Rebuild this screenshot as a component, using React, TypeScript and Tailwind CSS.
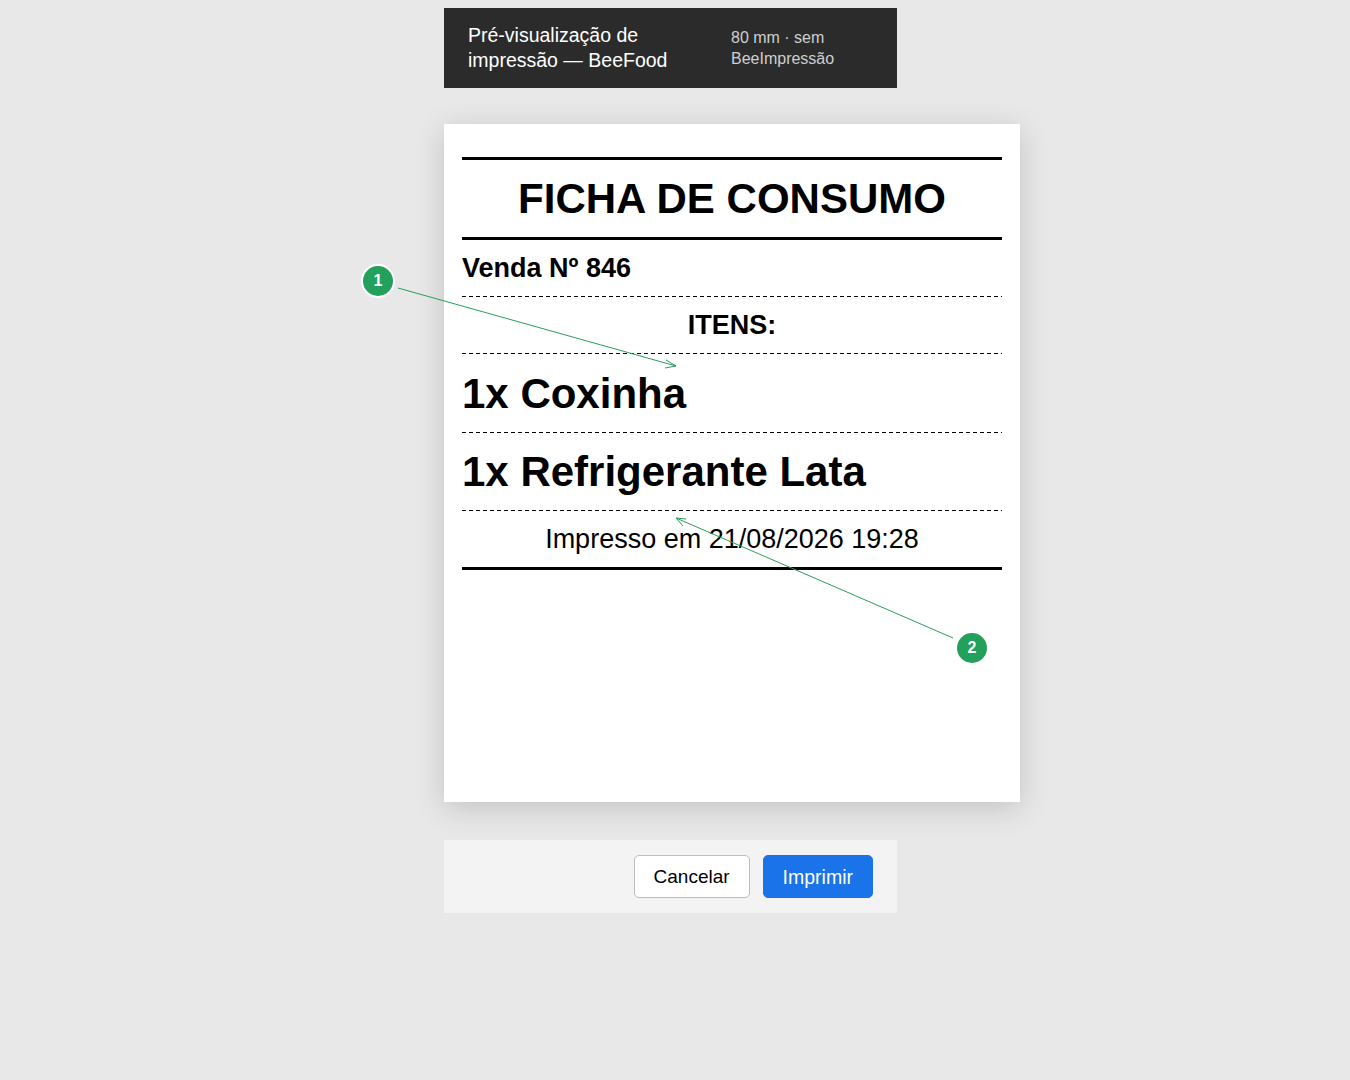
const dash = "h-px w-full bg-[repeating-linear-gradient(to_right,#000_0_4px,transparent_4px_7px)]";

export default function App() {
  const font = { fontFamily: '"Liberation Sans", Arial, sans-serif' };
  return (
    <div className="relative min-h-[1080px] w-full bg-[#e8e8e8] pt-2" style={font}>
      <div className="mx-auto flex w-[462px] flex-col">
        <header className="flex h-[80px] w-[453px] items-center gap-6 bg-[#2b2b2b] px-6">
          <div className="w-[239px] text-[19.5px] leading-[25px] text-white">
            Pré-visualização de impressão — BeeFood
          </div>
          <div className="-mt-px flex-1 text-[16px] leading-[21px] text-[#cfcfcf]">80 mm · sem BeeImpressão</div>
        </header>

        <main className="mt-9 h-[678px] w-[576px] bg-white px-[18px] pt-[33px] shadow-[0_6px_28px_rgba(0,0,0,0.16)]">
          <div className="border-y-[3px] border-black text-black">
            <div className="flex h-[80px] items-center justify-center border-b-[3px] border-black text-[42px] font-bold">
              FICHA DE CONSUMO
            </div>
            <div className="flex h-[56px] items-center text-[27px] font-bold">Venda Nº 846</div>
            <div className={dash} />
            <div className="flex h-[56px] items-center justify-center text-[27px] font-bold">ITENS:</div>
            <div className={dash} />
            <div className="flex h-[78px] items-center text-[42px] font-bold">1x Coxinha</div>
            <div className={dash} />
            <div className="flex h-[77px] items-center text-[42px] font-bold">1x Refrigerante Lata</div>
            <div className={dash} />
            <div className="flex h-[56px] items-center justify-center text-[27px]">Impresso em 21/08/2026 19:28</div>
          </div>
        </main>

        <footer className="mt-[38px] flex w-[453px] items-center justify-end gap-[13px] bg-[#f3f3f3] px-6 py-[15px]">
          <button className="h-[43px] rounded-[5px] border border-[#bdbdbd] bg-white px-[19px] pt-[2px] text-[19px] text-black">
            Cancelar
          </button>
          <button className="h-[43px] rounded-[5px] border border-[#1a73e8] bg-[#1a73e8] px-[19px] pt-[2px] text-[19.5px] text-white">
            Imprimir
          </button>
        </footer>
      </div>

      <svg className="pointer-events-none absolute left-0 top-0" width="1350" height="1080" viewBox="0 0 1350 1080">
        <g stroke="#2a9d5c" strokeWidth="1" fill="none">
          <line x1="398" y1="288" x2="676" y2="366" />
          <polyline points="666,360 676,366 665,368" />
          <line x1="953" y1="638" x2="676" y2="518" />
          <polyline points="686,519 676,518 683,526" />
        </g>
      </svg>

      <div className="pointer-events-none absolute left-[361px] top-[264px] flex h-[34px] w-[34px] items-center justify-center rounded-full border-2 border-white bg-[#23a05b] text-[16px] font-bold text-white">
        1
      </div>
      <div className="pointer-events-none absolute left-[955px] top-[631px] flex h-[34px] w-[34px] items-center justify-center rounded-full border-2 border-white bg-[#23a05b] text-[16px] font-bold text-white">
        2
      </div>
    </div>
  );
}
